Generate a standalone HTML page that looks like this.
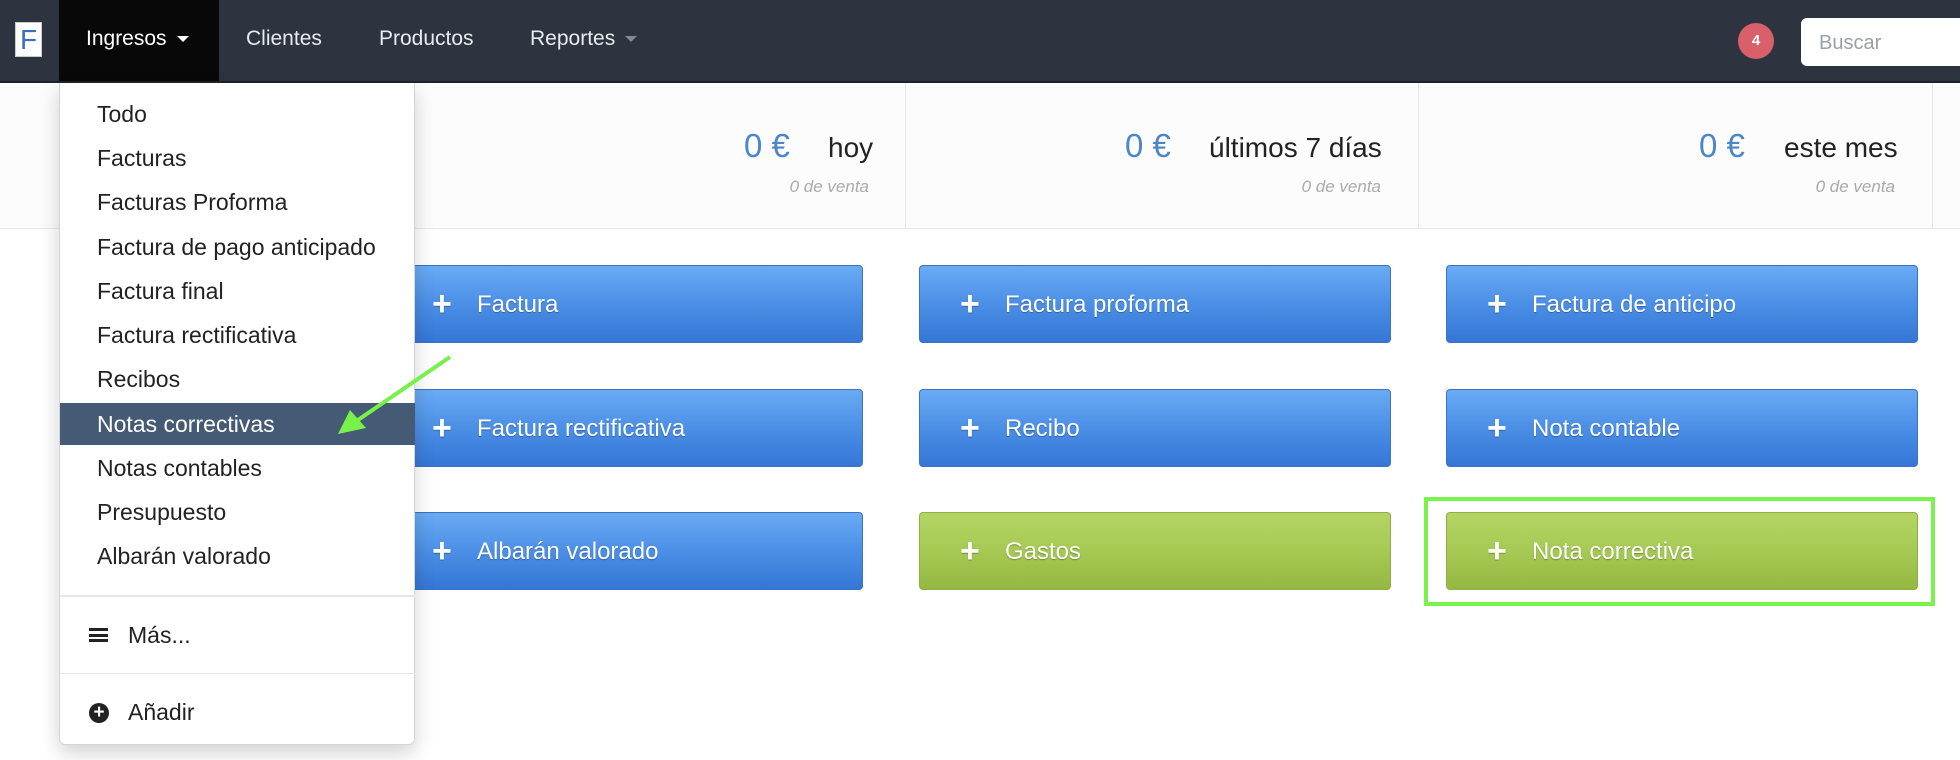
<!DOCTYPE html>
<html><head><meta charset="utf-8"><style>
*{margin:0;padding:0;box-sizing:border-box}
body{width:1960px;height:760px;overflow:hidden;background:#fff;font-family:"Liberation Sans",Arial,sans-serif;position:relative}
.nav{position:absolute;left:0;top:0;width:1960px;height:83px;background:#2d333f;border-bottom:2px solid #1e222a}
.nav .t{position:absolute;top:27px;font-size:21px;color:#e8eaed}
.logo{position:absolute;left:15px;top:22px;width:27px;height:35px;background:#fff;border:1px solid #ccc;color:#3a6fc0;font-size:28px;text-align:center;line-height:34px}
.act{position:absolute;left:59px;top:0;width:160px;height:81px;background:#080808}
.caret{display:inline-block;width:0;height:0;border-left:6px solid transparent;border-right:6px solid transparent;border-top:6px solid #fff;vertical-align:middle;margin-left:10px}
.badge{position:absolute;left:1738px;top:23px;width:36px;height:36px;border-radius:50%;background:#d9606b;color:#fff;font-weight:bold;font-size:15px;text-align:center;line-height:36px}
.search{position:absolute;left:1801px;top:18px;width:180px;height:48px;background:#fff;border-radius:6px;color:#9aa0a6;font-size:20px;padding:14px 18px}
.stats{position:absolute;left:0;top:83px;width:1960px;height:146px;background:#fcfcfc;border-bottom:1px solid #e6e6e6}
.sep{position:absolute;top:83px;height:146px;width:1px;background:#e8e8e8}
.amt{position:absolute;top:127px;font-size:33px;color:#4a86c8}
.lbl{position:absolute;top:132px;font-size:28px;color:#222}
.sub{position:absolute;top:177px;font-size:17px;color:#aaa;font-style:italic;text-align:right}
.btn{position:absolute;width:472px;height:78px;border-radius:4px;color:#fff;font-size:24px;text-shadow:0 1px 1px rgba(0,0,0,.3);border:1px solid #3a72c4;background:linear-gradient(#6aabf4,#4b8fe6 50%,#3576d6)}
.btn.g{border-color:#8fae45;background:linear-gradient(#b4d562,#a6c954 50%,#95b842)}
.btn b{position:absolute;left:40px;top:20px;font-size:34px;line-height:36px;font-weight:900}
.btn span{position:absolute;left:85px;top:25px}
.hl{position:absolute;left:1424px;top:497px;width:511px;height:109px;border:4px solid #78f24c}
.dd{position:absolute;left:59px;top:83px;width:356px;height:662px;background:#fff;border:1px solid #d5d5d5;border-top:none;border-radius:0 0 6px 6px;box-shadow:0 8px 20px rgba(0,0,0,.18)}
.it{position:absolute;left:37px;font-size:23px;color:#222}
.hi{position:absolute;left:0;top:320px;width:355px;height:42px;background:#445a75}
.dv{position:absolute;left:0;width:355px;height:2px;background:#e6e6e6}
</style></head><body>
<div class="nav">
<div class="logo">F</div>
<div class="act"></div>
<div class="t" style="left:86px;color:#fff">Ingresos<span class="caret"></span></div>
<div class="t" style="left:246px">Clientes</div>
<div class="t" style="left:379px">Productos</div>
<div class="t" style="left:530px">Reportes<span class="caret" style="border-top-color:#888"></span></div>
<div class="badge">4</div>
<div class="search">Buscar</div>
</div>
<div class="stats"></div>
<div class="sep" style="left:905px"></div><div class="sep" style="left:1418px"></div><div class="sep" style="left:1932px"></div>
<div class="amt" style="left:744px">0 €</div><div class="lbl" style="left:828px">hoy</div><div class="sub" style="left:700px;width:169px">0 de venta</div>
<div class="amt" style="left:1125px">0 €</div><div class="lbl" style="left:1209px">últimos 7 días</div><div class="sub" style="left:1200px;width:181px">0 de venta</div>
<div class="amt" style="left:1699px">0 €</div><div class="lbl" style="left:1784px">este mes</div><div class="sub" style="left:1720px;width:175px">0 de venta</div>

<div class="btn" style="left:391px;top:265px"><b>+</b><span>Factura</span></div>
<div class="btn" style="left:919px;top:265px"><b>+</b><span>Factura proforma</span></div>
<div class="btn" style="left:1446px;top:265px"><b>+</b><span>Factura de anticipo</span></div>
<div class="btn" style="left:391px;top:389px"><b>+</b><span>Factura rectificativa</span></div>
<div class="btn" style="left:919px;top:389px"><b>+</b><span>Recibo</span></div>
<div class="btn" style="left:1446px;top:389px"><b>+</b><span>Nota contable</span></div>
<div class="btn" style="left:391px;top:512px"><b>+</b><span>Albarán valorado</span></div>
<div class="btn g" style="left:919px;top:512px"><b>+</b><span>Gastos</span></div>
<div class="btn g" style="left:1446px;top:512px"><b>+</b><span>Nota correctiva</span></div>
<div class="hl"></div>

<div class="dd">
<div class="hi"></div>
<div class="it" style="top:18px">Todo</div>
<div class="it" style="top:62px">Facturas</div>
<div class="it" style="top:106px">Facturas Proforma</div>
<div class="it" style="top:151px">Factura de pago anticipado</div>
<div class="it" style="top:195px">Factura final</div>
<div class="it" style="top:239px">Factura rectificativa</div>
<div class="it" style="top:283px">Recibos</div>
<div class="it" style="top:328px;color:#fff">Notas correctivas</div>
<div class="it" style="top:372px">Notas contables</div>
<div class="it" style="top:416px">Presupuesto</div>
<div class="it" style="top:460px">Albarán valorado</div>
<div class="dv" style="top:512px"></div>
<div class="it" style="top:539px;left:68px">Más...</div>
<div style="position:absolute;left:29px;top:545px;width:19px;height:14px;border-top:3px solid #222;border-bottom:3px solid #222"><div style="margin-top:2.5px;height:3px;background:#222"></div></div>
<div class="dv" style="top:590px;height:1px"></div>
<div class="it" style="top:616px;left:68px">Añadir</div>
<div style="position:absolute;left:29px;top:620px;width:20px;height:20px;border-radius:50%;background:#222;color:#fff;font-weight:bold;font-size:19px;line-height:20px;text-align:center">+</div>
</div>
<svg style="position:absolute;left:0;top:0" width="1960" height="760"><line x1="450" y1="357" x2="355" y2="422" stroke="#77f24a" stroke-width="4"/><polygon points="338,434 350,410 366,428" fill="#77f24a"/></svg>
</body></html>
